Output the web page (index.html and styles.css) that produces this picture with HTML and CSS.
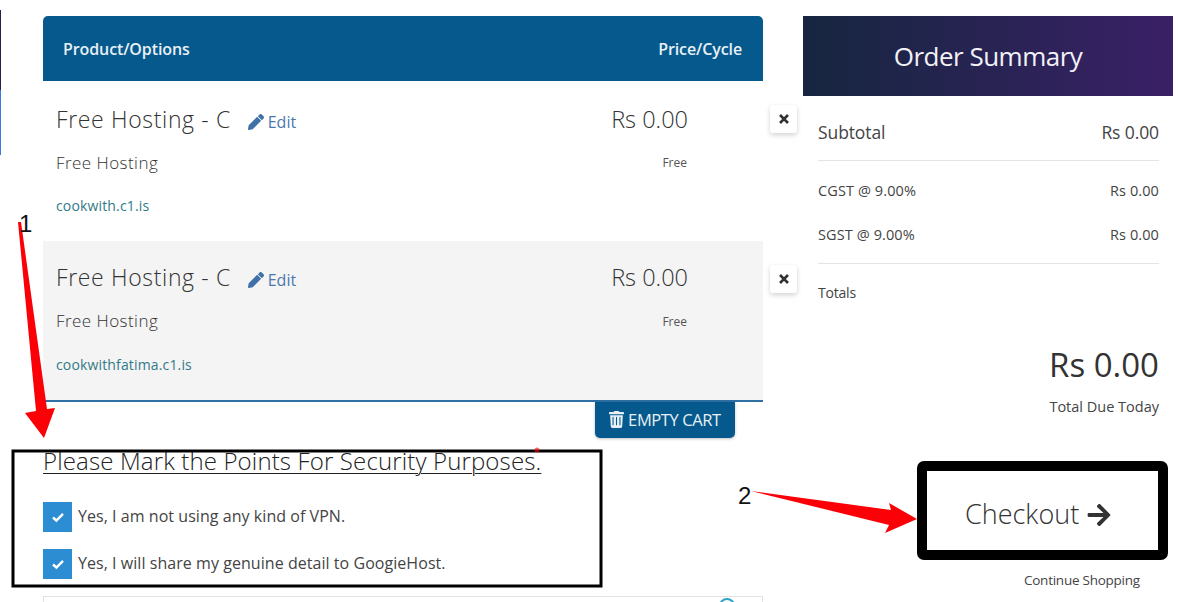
FILE: index.html
```html
<!DOCTYPE html>
<html lang="en">
<head>
    <meta charset="UTF-8">
    <meta name="viewport" content="width=device-width, initial-scale=1.0">
    <title>Shopping Cart</title>
    <link rel="stylesheet" href="styles.css">
</head>
<body>

    <div class="page">
        <div class="edge-strip"></div>

        <div class="cart">
            <div class="cart-head">
                <span>Product/Options</span>
                <span>Price/Cycle</span>
            </div>

            <div class="item">
                <div class="item-body">
                    <div class="item-info">
                        <div class="item-name">Free Hosting - C
                            <a class="edit-link" href="#">
                                <svg class="edit-icon" viewBox="0 0 512 512"><path d="M497.9 142.1l-46.1 46.1c-4.7 4.7-12.3 4.7-17 0l-111-111c-4.7-4.7-4.7-12.3 0-17l46.1-46.1c18.7-18.7 49.1-18.7 67.9 0l60.1 60.1c18.8 18.7 18.8 49.1 0 67.9zM284.2 99.8L21.6 362.4.4 483.9c-2.9 16.4 11.4 30.6 27.8 27.8l121.5-21.3 262.6-262.6c4.7-4.7 4.7-12.3 0-17l-111-111c-4.8-4.7-12.4-4.7-17.1 0z"/></svg>
                                Edit
                            </a>
                        </div>
                        <div class="item-group">Free Hosting</div>
                        <a class="item-domain" href="#">cookwith.c1.is</a>
                    </div>
                    <div class="item-price">
                        <div class="price">Rs 0.00</div>
                        <div class="cycle">Free</div>
                    </div>
                </div>
                <button class="remove">
                    <svg viewBox="0 0 12 12"><path d="M2 2l8 8M10 2l-8 8"/></svg>
                </button>
            </div>

            <div class="item alt">
                <div class="item-body">
                    <div class="item-info">
                        <div class="item-name">Free Hosting - C
                            <a class="edit-link" href="#">
                                <svg class="edit-icon" viewBox="0 0 512 512"><path d="M497.9 142.1l-46.1 46.1c-4.7 4.7-12.3 4.7-17 0l-111-111c-4.7-4.7-4.7-12.3 0-17l46.1-46.1c18.7-18.7 49.1-18.7 67.9 0l60.1 60.1c18.8 18.7 18.8 49.1 0 67.9zM284.2 99.8L21.6 362.4.4 483.9c-2.9 16.4 11.4 30.6 27.8 27.8l121.5-21.3 262.6-262.6c4.7-4.7 4.7-12.3 0-17l-111-111c-4.8-4.7-12.4-4.7-17.1 0z"/></svg>
                                Edit
                            </a>
                        </div>
                        <div class="item-group">Free Hosting</div>
                        <a class="item-domain" href="#">cookwithfatima.c1.is</a>
                    </div>
                    <div class="item-price">
                        <div class="price">Rs 0.00</div>
                        <div class="cycle">Free</div>
                    </div>
                </div>
                <button class="remove">
                    <svg viewBox="0 0 12 12"><path d="M2 2l8 8M10 2l-8 8"/></svg>
                </button>
            </div>

            <div class="cart-actions">
                <button class="empty-cart">
                    <svg class="trash-icon" viewBox="0 0 448 512"><path d="M432 32H312l-9.400-18.700A24 24 0 0 0 281.100 0H166.800a23.700 23.700 0 0 0-21.400 13.300L136 32H16A16 16 0 0 0 0 48v32a16 16 0 0 0 16 16h416a16 16 0 0 0 16-16V48a16 16 0 0 0-16-16zM53.200 467a48 48 0 0 0 47.900 45h245.800a48 48 0 0 0 47.900-45L416 128H32zM312 192a16 16 0 0 1 32 0v224a16 16 0 0 1-32 0zm-104 0a16 16 0 0 1 32 0v224a16 16 0 0 1-32 0zm-104 0a16 16 0 0 1 32 0v224a16 16 0 0 1-32 0z"/></svg>
                    EMPTY CART
                </button>
            </div>

            <div class="security">
                <h3 class="security-title">Please Mark the Points For Security Purposes.</h3>
                <label class="check-row">
                    <span class="check-box"><svg viewBox="0 0 16 16"><path d="M3 8.500l3.400 3L13 4.800"/></svg></span>
                    Yes, I am not using any kind of VPN.
                </label>
                <label class="check-row">
                    <span class="check-box"><svg viewBox="0 0 16 16"><path d="M3 8.500l3.400 3L13 4.800"/></svg></span>
                    Yes, I will share my genuine detail to GoogieHost.
                </label>
            </div>

            <div class="next-box"><span class="next-badge"></span></div>
        </div>

        <div class="summary">
            <h2 class="summary-head">Order Summary</h2>
            <div class="summary-body">
                <div class="sum-row sub"><span>Subtotal</span><span>Rs 0.00</span></div>
                <div class="sum-taxes">
                    <div class="sum-row tax"><span>CGST @ 9.00%</span><span>Rs 0.00</span></div>
                    <div class="sum-row tax"><span>SGST @ 9.00%</span><span>Rs 0.00</span></div>
                </div>
                <div class="totals-label">Totals</div>
                <div class="total-amount">Rs 0.00</div>
                <div class="total-note">Total Due Today</div>
                <a class="checkout" href="#">Checkout
                    <svg class="checkout-arrow" viewBox="0 0 448 512"><path d="M190.500 66.900l22.200-22.200c9.400-9.400 24.600-9.400 33.900 0L441 239c9.400 9.400 9.400 24.600 0 33.900L246.600 467.300c-9.400 9.400-24.600 9.400-33.900 0l-22.200-22.200c-9.500-9.500-9.300-25 .4-34.300L311.400 296H24c-13.300 0-24-10.700-24-24v-32c0-13.300 10.700-24 24-24h287.400L190.900 101.200c-9.800-9.300-10-24.800-.4-34.300z"/></svg>
                </a>
                <a class="continue" href="#">Continue Shopping</a>
            </div>
        </div>
    </div>

    <!-- annotations drawn on top of the screenshot -->
    <svg class="notes" viewBox="0 0 1178 602">
        <rect class="note-box thin" x="13" y="451" width="588" height="135"/>
        <rect class="note-box thick" x="922" y="466" width="241" height="89" rx="2"/>
        <polygon class="note-arrow" points="18,222 21,222 47,409 55,408 44,438 25,413 36,411"/>
        <polygon class="note-arrow" points="751,491 891,510 889,503 917,519 885,533 889,525"/>
        <circle class="note-arrow faint" cx="537" cy="450" r="2.500"/>
        <text class="note-num" x="19" y="232">1</text>
        <text class="note-num" x="738" y="504">2</text>
    </svg>

</body>
</html>
```

FILE: styles.css
```css
/* General Styles */
body {
    font-family: 'Open Sans', 'Noto Sans', sans-serif;
    background-color: #fff;
    color: #444;
    margin: 0;
    height: 602px;
    overflow: hidden;
    position: relative;
}

a {
    text-decoration: none;
}

.page {
    display: flex;
    align-items: flex-start;
    height: 602px;
    overflow: hidden;
}

.edge-strip {
    width: 1px;
    height: 145px;
    margin-top: 10px;
    background: linear-gradient(#2a2050 0, #2a2050 55%, #3b7ae0 55%, #3b7ae0 100%);
}

/* Cart column */
.cart {
    width: 758px;
    margin: 16px 0 0 42px;
}

.cart-head {
    width: 720px;
    height: 65px;
    box-sizing: border-box;
    padding: 0 21px 0 20px;
    display: flex;
    justify-content: space-between;
    align-items: center;
    background: #05598c;
    color: #e8f0f6;
    font-size: 16px;
    font-weight: 600;
    letter-spacing: -0.1px;
    border-radius: 5px 5px 0 0;
}

.item {
    display: flex;
    align-items: flex-start;
}

.item-body {
    width: 720px;
    height: 160px;
    box-sizing: border-box;
    padding: 21px 75px 0 13px;
    display: flex;
    justify-content: space-between;
}

.item.alt .item-body {
    height: 159px;
    padding-top: 19px;
    background: #f4f4f4;
}

.item-name {
    font-size: 23px;
    font-weight: 300;
    letter-spacing: 0.65px;
    line-height: 34px;
    color: #333;
}

.edit-link {
    font-size: 16px;
    letter-spacing: 0;
    font-weight: 400;
    color: #4a78ad;
    margin-left: 10px;
}

.edit-icon {
    width: 16px;
    height: 16px;
    fill: #3f71a8;
    vertical-align: -2px;
}

.item-group {
    font-size: 17px;
    font-weight: 300;
    letter-spacing: 0.45px;
    line-height: 24px;
    margin-top: 12px;
    color: #333;
}

.item-domain {
    display: block;
    font-size: 14px;
    letter-spacing: 0.15px;
    line-height: 20px;
    margin-top: 21px;
    color: #327a86;
}

.item.alt .item-domain {
    margin-top: 22px;
}

.item-price {
    text-align: right;
}

.price {
    font-size: 23.5px;
    font-weight: 300;
    line-height: 34px;
    color: #333;
}

.cycle {
    font-size: 12px;
    line-height: 20px;
    margin: 17px 1px 0 0;
    color: #555;
}

.item.alt .cycle {
    margin-top: 18px;
}

.remove {
    width: 27px;
    height: 28px;
    margin: 24px 0 0 7px;
    padding: 0;
    border: none;
    border-radius: 3px;
    background: #fff;
    box-shadow: 0 2px 5px rgba(0, 0, 0, 0.18);
}

.remove svg {
    display: block;
    width: 12px;
    height: 12px;
    margin: 0 auto;
    fill: none;
    stroke: #333;
    stroke-width: 2.6;
}

.cart-actions {
    width: 720px;
    box-sizing: border-box;
    border-top: 2px solid #2f70a5;
    padding-right: 28px;
    display: flex;
    justify-content: flex-end;
}

.empty-cart {
    width: 140px;
    height: 36px;
    padding: 0 0 2px;
    border: none;
    border-radius: 0 0 5px 5px;
    background: #05598c;
    color: #e8f0f6;
    font-family: inherit;
    font-size: 16.5px;
    letter-spacing: -0.4px;
    box-shadow: 0 1px 3px rgba(0, 0, 0, 0.25);
}

.trash-icon {
    width: 15px;
    height: 17px;
    fill: #e8f0f6;
    vertical-align: -2px;
}

/* Security check */
.security {
    margin-top: 8px;
}

.security-title {
    margin: 0 0 26px;
    font-size: 24px;
    font-weight: 300;
    line-height: 30px;
    letter-spacing: 0.14px;
    color: #222;
    text-decoration: underline;
    text-decoration-thickness: 1px;
    text-underline-offset: 3px;
}

.check-row {
    display: flex;
    align-items: center;
    gap: 6px;
    height: 28px;
    padding-bottom: 2px;
    margin-bottom: 17px;
    font-size: 16px;
    letter-spacing: 0.05px;
    color: #444;
}

.check-box {
    width: 29px;
    height: 30px;
    margin-bottom: -2px;
    background: #2c8dd3;
    display: flex;
    align-items: center;
    justify-content: center;
}

.check-box svg {
    width: 16px;
    height: 16px;
    fill: none;
    stroke: #fff;
    stroke-width: 2.4;
}

.next-box {
    width: 718px;
    height: 20px;
    border: 1px solid #e2e2e2;
    display: flex;
    justify-content: flex-end;
}

.next-badge {
    width: 12px;
    height: 12px;
    margin: 1px 27px 0 0;
    border: 2px solid #2fa3c7;
    border-radius: 50%;
}

/* Order summary */
.summary {
    width: 370px;
    margin: 16px 0 0 2px;
}

.summary-head {
    margin: 0;
    height: 80px;
    line-height: 80px;
    text-align: center;
    font-size: 26px;
    font-weight: 400;
    letter-spacing: -0.5px;
    color: #f2f2f6;
    background: linear-gradient(90deg, #16263f, #3a2067);
}

.summary-body {
    padding: 0 14px 0 15px;
}

.sum-row {
    display: flex;
    justify-content: space-between;
}

.sum-row.sub {
    height: 65px;
    padding-top: 23px;
    box-sizing: border-box;
    line-height: 26px;
    font-size: 17.5px;
    letter-spacing: -0.1px;
    border-bottom: 1px solid #e4e4e4;
}

.sum-taxes {
    padding: 19px 0 17px;
    border-bottom: 1px solid #e4e4e4;
}

.sum-row.tax {
    line-height: 22px;
    font-size: 14.5px;
    letter-spacing: 0.1px;
}

.sum-row.tax + .sum-row.tax {
    margin-top: 22px;
}

.totals-label {
    margin-top: 18px;
    font-size: 14px;
    line-height: 22px;
    letter-spacing: -0.2px;
}

.total-amount {
    margin-top: 38px;
    text-align: right;
    font-size: 33px;
    line-height: 46px;
    color: #333;
}

.total-note {
    margin-top: 9px;
    text-align: right;
    font-size: 14.5px;
    line-height: 20px;
}

.checkout {
    display: block;
    margin: 77px 0 0 147px;
    font-size: 27px;
    line-height: 40px;
    font-weight: 300;
    white-space: nowrap;
    color: #333;
}

.checkout-arrow {
    width: 26px;
    height: 26px;
    fill: #333;
    vertical-align: -4px;
}

.continue {
    display: block;
    margin: 36px 0 0 206px;
    font-size: 13.5px;
    line-height: 20px;
    letter-spacing: -0.25px;
    white-space: nowrap;
    color: #444;
}

/* Annotations */
.notes {
    position: absolute;
    left: 0;
    top: 0;
    width: 1178px;
    height: 602px;
    pointer-events: none;
}

.note-box {
    fill: none;
    stroke: #000;
}

.note-box.thin {
    stroke-width: 3;
}

.note-box.thick {
    stroke-width: 10;
}

.note-arrow {
    fill: #fb0007;
}

.note-arrow.faint {
    opacity: 0.6;
}

.note-num {
    font-family: 'Liberation Sans', sans-serif;
    font-size: 24px;
    fill: #111;
}
```
